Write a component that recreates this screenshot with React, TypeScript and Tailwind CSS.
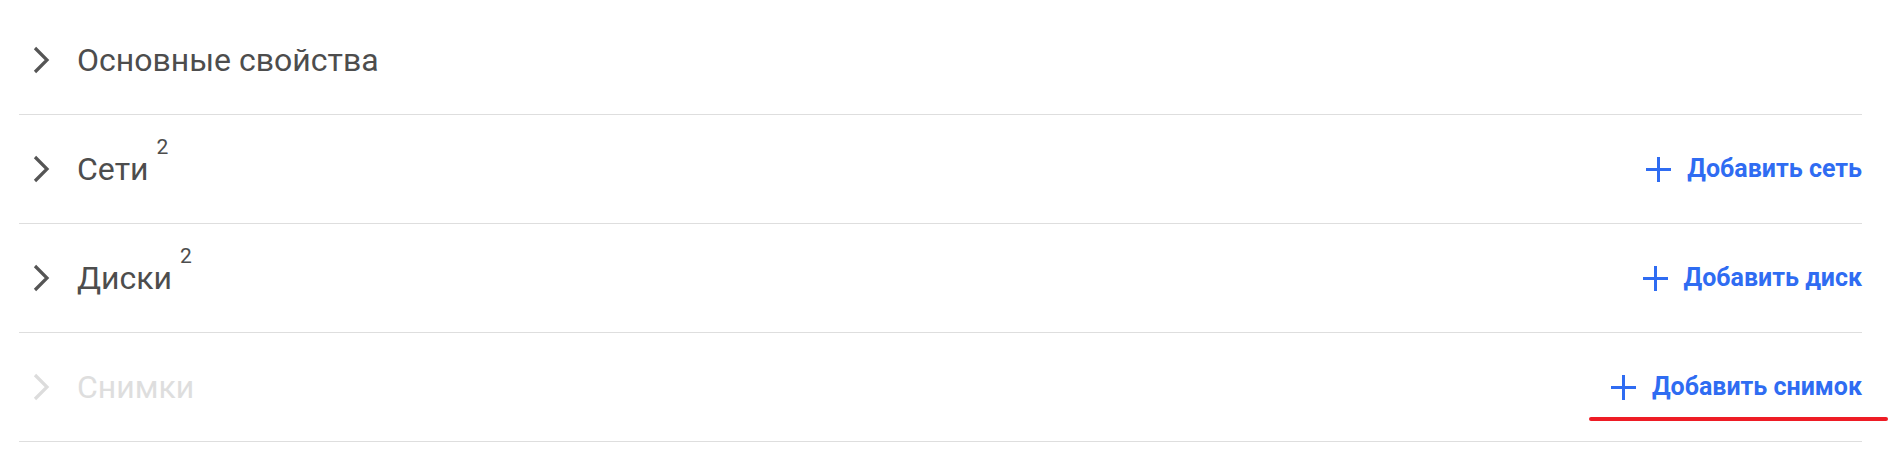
import React from 'react';

type Section = {
  title: string;
  count?: number;
  action?: string;
  disabled?: boolean;
};

const sections: Section[] = [
  { title: 'Основные свойства' },
  { title: 'Сети', count: 2, action: 'Добавить сеть' },
  { title: 'Диски', count: 2, action: 'Добавить диск' },
  { title: 'Снимки', action: 'Добавить снимок', disabled: true },
];

function Chevron({ disabled }: { disabled?: boolean }) {
  return (
    <svg width="18" height="28" viewBox="0 0 18 28" className={disabled ? 'text-[#dcdcdc]' : 'text-[#555555]'}>
      <path d="M3 2 L15 14 L3 26" fill="none" stroke="currentColor" strokeWidth="3.2" />
    </svg>
  );
}

function Plus() {
  return (
    <svg width="25" height="25" viewBox="0 0 25 25" className="text-[#2f6cf2]">
      <path d="M12.5 0 V25 M0 12.5 H25" fill="none" stroke="currentColor" strokeWidth="3" />
    </svg>
  );
}

export default function App() {
  return (
    <div className="relative bg-white w-[1901px] h-[468px] pt-[6px] pl-[19px] font-['Roboto',sans-serif]">
      <div className="w-[1843px]">
        {sections.map((s) => (
          <div key={s.title} className="h-[109px] border-b border-[#dedede] flex items-center justify-between">
            <div className="flex items-center pl-[13px]">
              <Chevron disabled={s.disabled} />
              <span className={`ml-[27px] text-[32px] leading-none ${s.disabled ? 'text-[#dedede]' : 'text-[#4d4d4d]'}`}>
                {s.title}
              </span>
              {s.count !== undefined && (
                <sup className="ml-[8px] text-[21px] leading-none text-[#4d4d4d] -translate-y-[11px]">{s.count}</sup>
              )}
            </div>
            {s.action && (
              <button className="flex items-center gap-[16px] text-[25px] font-bold text-[#2f6cf2]">
                <Plus />
                {s.action}
              </button>
            )}
          </div>
        ))}
      </div>
      <div className="absolute left-[1589px] top-[417px] w-[299px] h-[4px] rounded-full bg-[#ee1c25]" />
    </div>
  );
}
